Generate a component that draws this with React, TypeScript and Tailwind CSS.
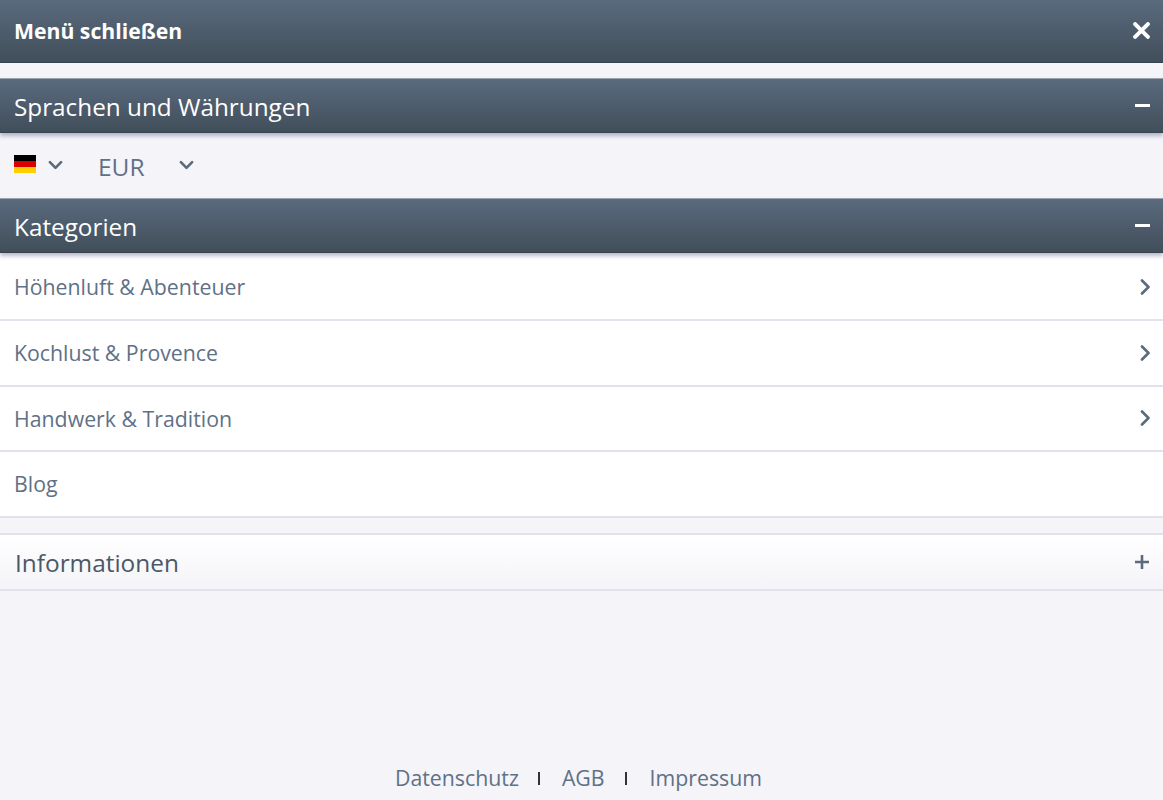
import React from "react";

const barClass =
  "flex items-center justify-between bg-gradient-to-b from-[#5a6b7f] to-[#414e5a] text-white";

const SectionBar = ({ title }: { title: string }) => (
  <div className={`${barClass} h-[55px] pl-[14px] pr-[13px] border-t border-t-[#9aa3ad] border-b border-b-[#39434e] shadow-[0_3px_4px_rgba(80,80,130,0.4)] relative`}>
    <span className="text-[24.3px] leading-none pt-[3px]">{title}</span>
    <span className="block w-[15px] h-[2.5px] bg-white" />
  </div>
);

const Chevron = ({ className }: { className: string }) => (
  <svg viewBox="0 0 16 10" className={className} fill="none" stroke="#5b6b7e" strokeWidth="2.8" strokeLinecap="round" strokeLinejoin="round">
    <path d="M2 2l6 6 6-6" />
  </svg>
);

const ChevronRight = () => (
  <svg viewBox="0 0 10 16" className="w-[10px] h-[16px]" fill="none" stroke="#5b6b7e" strokeWidth="2.6" strokeLinecap="round" strokeLinejoin="round">
    <path d="M2 1.5L8.5 8 2 14.5" />
  </svg>
);

const categories = [
  { name: "Höhenluft & Abenteuer", sub: true },
  { name: "Kochlust & Provence", sub: true },
  { name: "Handwerk & Tradition", sub: true },
  { name: "Blog", sub: false },
];

export default function App() {
  return (
    <div className="h-[800px] overflow-hidden flex flex-col bg-[#f4f4f9] font-['Open_Sans',sans-serif]">
      {/* Close bar */}
      <div className={`${barClass} h-[63px] pl-[14px] pr-[13px] border-b border-b-[#39434e]`}>
        <span className="text-[21.2px] font-bold leading-none pb-[1px]">Menü schließen</span>
        <svg viewBox="0 0 16 16" className="w-[17px] h-[17px] -mt-[2px]" fill="none" stroke="#fff" strokeWidth="3.8" strokeLinecap="round">
          <path d="M2 2l12 12M14 2L2 14" />
        </svg>
      </div>

      <div className="mt-[15px]">
        <SectionBar title="Sprachen und Währungen" />
      </div>

      {/* Language and currency */}
      <div className="h-[65px] flex items-center pl-[14px] text-[#5f7186]">
        <div className="w-[22px] h-[18px] flex flex-col -mt-[4px]">
          <div className="flex-1 bg-black" />
          <div className="flex-1 bg-[#dd0000]" />
          <div className="flex-1 bg-[#ffce00]" />
        </div>
        <Chevron className="w-[15px] h-[10px] ml-[12px] -mt-[1px]" />
        <span className="ml-[35px] text-[24.5px] leading-none pt-[4px]">EUR</span>
        <Chevron className="w-[15px] h-[10px] ml-[34px] -mt-[1px]" />
      </div>

      <SectionBar title="Kategorien" />

      {/* Categories */}
      <ul className="bg-white pt-[2.5px]">
        {categories.map((c) => (
          <li
            key={c.name}
            className="h-[65.6px] flex items-center justify-between pl-[14px] pr-[13px] border-b-2 border-b-[#e2e2ec] text-[21.3px] text-[#5f7186]"
          >
            <span>{c.name}</span>
            {c.sub && <ChevronRight />}
          </li>
        ))}
      </ul>

      {/* Informationen */}
      <div className="mt-[15px] h-[58px] flex items-center justify-between pl-[15px] pr-[14px] bg-gradient-to-b from-white to-[#f4f4f9] border-y-2 border-[#e2e2ec] text-[#4b5866]">
        <span className="text-[24.4px] pt-[3px]">Informationen</span>
        <svg viewBox="0 0 14 14" className="w-[14px] h-[14px]" stroke="#5b6b7e" strokeWidth="2.6">
          <path d="M0 7h14M7 0v14" />
        </svg>
      </div>

      {/* Footer links */}
      <div className="mt-auto pb-[6px] pr-[6px] flex justify-center items-center text-[21.3px] text-[#5f7186]">
        <span>Datenschutz</span>
        <span className="ml-[19px] mr-[22px] w-[2px] h-[13px] bg-[#333]" />
        <span>AGB</span>
        <span className="ml-[20px] mr-[23px] w-[2px] h-[13px] bg-[#333]" />
        <span>Impressum</span>
      </div>
    </div>
  );
}
